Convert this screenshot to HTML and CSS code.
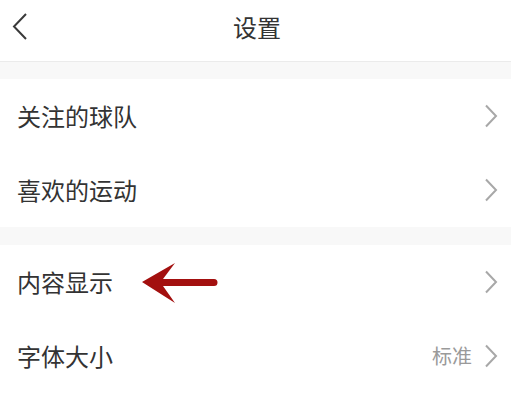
FILE: index.html
```html
<!DOCTYPE html>
<html lang="zh-CN">
<head>
<meta charset="utf-8">
<title>设置</title>
<link rel="stylesheet" href="styles.css">
</head>
<body>
<div class="page">
  <header class="topbar">
    <div class="back">
      <svg width="16" height="28" viewBox="0 0 16 28"><path d="M14 1 L2 13.5 L14 26" fill="none" stroke="#3a3a3a" stroke-width="2"/></svg>
    </div>
    <div class="title">设置</div>
    <div class="spacer"></div>
  </header>
  <div class="band band-top"></div>
  <section class="group">
    <div class="row"><span class="label">关注的球队</span><span class="right"><svg class="chev" width="14" height="24" viewBox="0 0 14 24"><path d="M2 1.5 L12 12 L2 22.5" fill="none" stroke="#a8a8a8" stroke-width="2"/></svg></span></div>
    <div class="row"><span class="label">喜欢的运动</span><span class="right"><svg class="chev" width="14" height="24" viewBox="0 0 14 24"><path d="M2 1.5 L12 12 L2 22.5" fill="none" stroke="#a8a8a8" stroke-width="2"/></svg></span></div>
  </section>
  <div class="band band-mid"></div>
  <section class="group">
    <div class="row row-mark"><span class="label">内容显示</span>
      <svg class="mark" width="80" height="44" viewBox="0 0 80 44"><path d="M2 21 L35 2 L23 18 L74 18 A3.5 3.5 0 0 1 74 25 L23 25 L35 42 Z" fill="#a3100f"/></svg>
      <span class="right"><svg class="chev" width="14" height="24" viewBox="0 0 14 24"><path d="M2 1.5 L12 12 L2 22.5" fill="none" stroke="#a8a8a8" stroke-width="2"/></svg></span></div>
    <div class="row"><span class="label">字体大小</span><span class="right"><span class="value">标准</span><svg class="chev" width="14" height="24" viewBox="0 0 14 24"><path d="M2 1.5 L12 12 L2 22.5" fill="none" stroke="#a8a8a8" stroke-width="2"/></svg></span></div>
  </section>
</div>
</body>
</html>
```
FILE: styles.css
```css
html, body {
  margin: 0;
  padding: 0;
  background: #ffffff;
}
body {
  font-family: "Noto Sans CJK SC", "Noto Sans", sans-serif;
  color: #333333;
}
.page {
  width: 511px;
  height: 401px;
  overflow: hidden;
}
.topbar {
  height: 61px;
  display: grid;
  grid-template-columns: 1fr auto 1fr;
  align-items: center;
  border-bottom: 1px solid #ebebeb;
}
.back {
  padding-left: 12px;
  display: flex;
  align-items: center;
  padding-bottom: 8px;
}
.title {
  font-size: 24px;
  color: #333;
  line-height: 1;
  padding-bottom: 8px;
  padding-left: 3px;
}
.band {
  background: #f8f8f8;
}
.band-top { height: 17px; }
.band-mid { height: 18px; }
.group {
  display: flex;
  flex-direction: column;
}
.row {
  height: 74px;
  display: flex;
  align-items: center;
  padding: 0 13px 0 17px;
  position: relative;
}
.label {
  font-size: 24px;
  line-height: 1;
  color: #333;
  flex: 1;
}
.right {
  display: flex;
  align-items: center;
  gap: 12px;
}
.value {
  font-size: 20px;
  color: #9a9a9a;
  line-height: 1;
}
.chev {
  display: block;
}
.mark {
  position: absolute;
  left: 140px;
  top: 16px;
}
```
